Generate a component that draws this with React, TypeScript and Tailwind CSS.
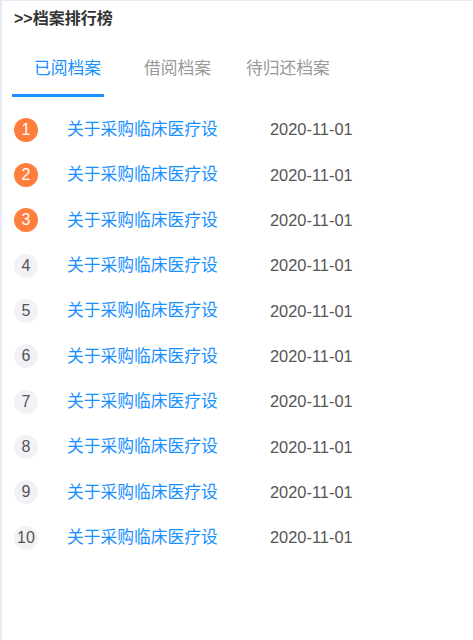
const rows = Array.from({ length: 10 }, (_, i) => ({
  rank: i + 1,
  title: "关于采购临床医疗设",
  date: "2020-11-01",
}));

const tabs = [
  { label: "已阅档案", active: true, cls: "ml-[10px] w-[92px] pl-[22px]" },
  { label: "借阅档案", active: false, cls: "w-[102px] pl-[40px]" },
  { label: "待归还档案", active: false, cls: "pl-[40px]" },
];

export default function App() {
  return (
    <div className="h-[640px] w-[473px] bg-white border-l-2 border-t border-[#e6ebf5] font-['Liberation_Sans','Noto_Sans_CJK_SC',sans-serif]">
      {/* Title */}
      <div className="pt-[7px] pl-[12px] text-[16px] leading-[22px] font-bold text-[#333]">
        &gt;&gt;档案排行榜
      </div>

      {/* Tabs */}
      <div className="mt-[11px] flex">
        {tabs.map((t) => (
          <div
            key={t.label}
            className={`h-[56px] pt-[2px] flex items-center text-[16.75px] whitespace-nowrap border-b-[3px] ${t.cls} ${
              t.active ? "text-[#1890ff] border-[#1890ff]" : "text-[#999] border-transparent"
            }`}
          >
            {t.label}
          </div>
        ))}
      </div>

      {/* List */}
      <div className="mt-[10px]">
        {rows.map((r) => (
          <div key={r.rank} className="h-[45.33px] flex items-center">
            <div
              className={`ml-[12px] w-[24px] h-[24px] rounded-full flex items-center justify-center text-[16px] leading-none shrink-0 ${
                r.rank <= 3 ? "bg-[#ff7e3e] text-white" : "bg-[#f0f2f5] text-[#555]"
              }`}
            >
              {r.rank}
            </div>
            <div className="ml-[29px] w-[160px] whitespace-nowrap text-[16.75px] text-[#1890ff]">
              {r.title}
            </div>
            <div className="ml-[43px] text-[16.4px] text-[#555]">{r.date}</div>
          </div>
        ))}
      </div>
    </div>
  );
}
